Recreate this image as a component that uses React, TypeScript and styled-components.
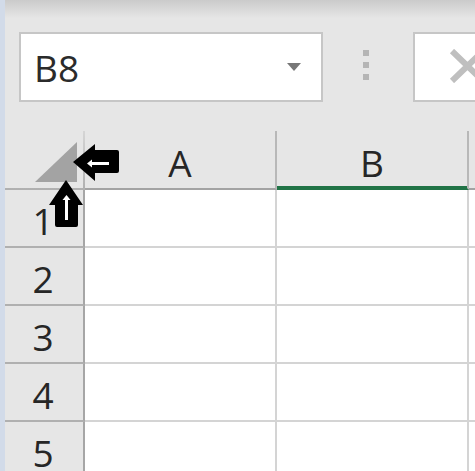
import styled, { createGlobalStyle } from 'styled-components';

const GlobalStyle = createGlobalStyle`
    html, body {
        margin: 0;
        padding: 0;
        background: #e6e6e6;
        overflow: hidden;
    }
    * {
        box-sizing: border-box;
    }
`;

const GREEN = '#217346';

// third column only peeks in at the right edge, so its label stays empty
const columns = ['A', 'B', ''];
const rows = [1, 2, 3, 4, 5];
const selectedColumn = 'B';

const App = () => {
    return (
        <>
            <GlobalStyle />
            <Window>
                <SideStrip />
                <Main>
                    <Toolbar>
                        <NameBox>
                            <NameText>B8</NameText>
                            <DropCaret />
                        </NameBox>
                        <Grip>
                            <GripDot />
                            <GripDot />
                            <GripDot />
                        </Grip>
                        <FormulaBox>
                            <CancelIcon width="36" height="34" viewBox="0 0 36 34">
                                <path d="M3 2 L34 32 M34 2 L3 32" stroke="#bfbfbf" strokeWidth="6" />
                            </CancelIcon>
                        </FormulaBox>
                    </Toolbar>

                    <Sheet>
                        <Corner>
                            <svg width="42" height="40" viewBox="0 0 42 40">
                                <polygon points="0,40 42,0 42,40" fill="#a3a3a3" />
                            </svg>
                        </Corner>
                        {columns.map((col, i) => (
                            <ColumnHeader key={i} selected={col === selectedColumn}>
                                {col}
                            </ColumnHeader>
                        ))}
                        {rows.map((row) => (
                            <Row key={row}>
                                <RowHeader>{row}</RowHeader>
                                {columns.map((col, i) => (
                                    <Cell key={i} />
                                ))}
                            </Row>
                        ))}

                        <LeftArrow width="52" height="42" viewBox="0 0 52 42">
                            <path
                                d="M3 20 L25 2 L25 8 L47 8 Q49 8 49 10 L49 29 Q49 31 47 31 L25 31 L25 39 Z"
                                fill="#000"
                            />
                            <path d="M21 21.5 L39 21.5" stroke="#fff" strokeWidth="3" />
                            <polygon points="17,21.5 22,17.5 22,25.5" fill="#fff" />
                        </LeftArrow>
                        <UpArrow width="38" height="52" viewBox="0 0 38 52">
                            <path
                                d="M19 2 L36 27 L31 27 L31 47 Q31 49 29 49 L10 49 Q8 49 8 47 L8 27 L2 27 Z"
                                fill="#000"
                            />
                            <path d="M19.5 21 L19.5 42" stroke="#fff" strokeWidth="3" />
                            <polygon points="19.5,17 15.5,22 23.5,22" fill="#fff" />
                        </UpArrow>
                    </Sheet>
                </Main>
            </Window>
        </>
    );
};

const Window = styled.div`
    display: flex;
    width: 475px;
    height: 471px;
    overflow: hidden;
    font-family: 'Open Sans', 'Liberation Sans', sans-serif;
    color: #262626;
`;

const SideStrip = styled.div`
    flex: 0 0 5px;
    background: #d2dbe9;
`;

const Main = styled.div`
    flex: 1;
    display: flex;
    flex-direction: column;
    min-width: 0;
`;

const Toolbar = styled.div`
    height: 131px;
    flex: 0 0 131px;
    padding: 32px 0 0 14px;
    display: flex;
    align-items: flex-start;
    background: linear-gradient(#cbcbcb 0, #e6e6e6 18px);
`;

const NameBox = styled.div`
    flex: 0 0 304px;
    height: 70px;
    border: 2px solid #c6c6c6;
    background: #fff;
    display: flex;
    align-items: center;
    justify-content: space-between;
    padding: 0 20px 0 13px;
`;

const NameText = styled.span`
    font-size: 37px;
    line-height: 1;
    color: #2b2b2b;
`;

const DropCaret = styled.span`
    width: 0;
    height: 0;
    border-left: 7px solid transparent;
    border-right: 7px solid transparent;
    border-top: 8px solid #777;
`;

const Grip = styled.div`
    margin: 18px 0 0 40px;
    display: flex;
    flex-direction: column;
    gap: 6px;
`;

const GripDot = styled.span`
    width: 6px;
    height: 6px;
    background: #b5b5b5;
`;

const FormulaBox = styled.div`
    flex: 0 0 200px;
    height: 70px;
    margin-left: 44px;
    border: 2px solid #c6c6c6;
    background: #fff;
    padding: 15px 0 0 34px;
`;

const CancelIcon = styled.svg`
    display: block;
`;

const Sheet = styled.div`
    position: relative;
    display: grid;
    grid-template-columns: 80px 192px 192px 192px;
    grid-auto-rows: 58px;
    grid-template-rows: 59px;
`;

const Row = styled.div`
    display: contents;
`;

const Corner = styled.div`
    display: flex;
    align-items: flex-end;
    justify-content: flex-end;
    padding: 0 6px 6px 0;
    border-right: 2px solid;
    border-bottom: 2px solid #c6c6c6;
    border-image: linear-gradient(#d6d6d6, #b0b0b0) 1;
    border-bottom-color: #c6c6c6;
`;

const ColumnHeader = styled.div<{ selected?: boolean }>`
    display: flex;
    align-items: center;
    justify-content: center;
    padding-top: 6px;
    font-size: 37px;
    border-right: 2px solid #b8b8b8;
    border-bottom: 2px solid ${({ selected }) => (selected ? GREEN : '#a3a3a3')};
    box-shadow: ${({ selected }) => (selected ? `inset 0 -2px 0 ${GREEN}` : 'none')};
`;

const RowHeader = styled.div`
    display: flex;
    align-items: center;
    justify-content: center;
    padding: 4px 2px 0 0;
    font-size: 37px;
    border-right: 2px solid #a6a6a6;
    border-bottom: 2px solid #b0b0b0;
`;

const Cell = styled.div`
    background: #fff;
    border-right: 2px solid #d4d4d4;
    border-bottom: 2px solid #d4d4d4;
`;

const LeftArrow = styled.svg`
    position: absolute;
    left: 65px;
    top: 11px;
`;

const UpArrow = styled.svg`
    position: absolute;
    left: 42px;
    top: 47px;
`;

export default App;
